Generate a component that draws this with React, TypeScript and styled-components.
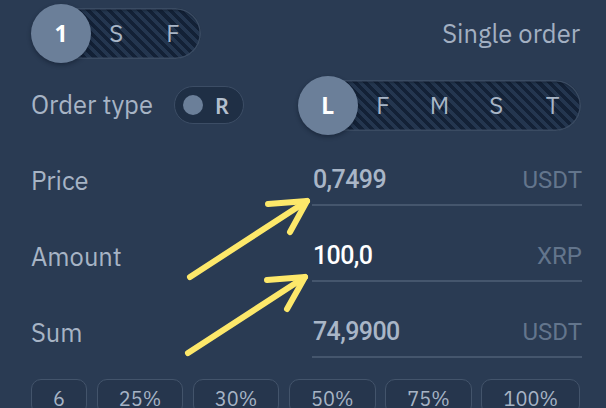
import React from 'react';
import styled, { createGlobalStyle } from 'styled-components';

const GlobalStyle = createGlobalStyle`
  html, body {
    margin: 0;
    padding: 0;
    background: #2a3b53;
  }
  body {
    font-family: 'IBM Plex Sans', 'Noto Sans', sans-serif;
  }
`;

const fields = [
  { label: 'Price', value: '0,7499', unit: 'USDT', active: false },
  { label: 'Amount', value: '100,0', unit: 'XRP', active: true },
  { label: 'Sum', value: '74,9900', unit: 'USDT', active: false },
];

const shares = ['6', '25%', '30%', '50%', '75%', '100%'];

const App: React.FC = () => {
  return (
    <StyledApp>
      <GlobalStyle />
      <TopRow>
        <Switch options={['1', 'S', 'F']} />
        <Title>Single order</Title>
      </TopRow>
      <OrderRow>
        <Label>Order type</Label>
        <MiniToggle>
          <MiniDot />
          <MiniText>R</MiniText>
        </MiniToggle>
        <Push />
        <Switch options={['L', 'F', 'M', 'S', 'T']} />
      </OrderRow>
      <Fields>
        {fields.map((f) => (
          <FieldRow key={f.label}>
            <Label>{f.label}</Label>
            <Input>
              <Value $active={f.active}>{f.value}</Value>
              <Unit>{f.unit}</Unit>
            </Input>
          </FieldRow>
        ))}
      </Fields>
      <Shares>
        {shares.map((s) => (
          <Share key={s}>{s}</Share>
        ))}
      </Shares>
      <Arrows width="606" height="408" viewBox="0 0 606 408">
        <g fill="none" stroke="#fde86a" strokeWidth="6" strokeLinecap="round" strokeLinejoin="round">
          <path d="M190 277 L307 201" />
          <path d="M268 204 L307 201 L290 232" />
          <path d="M188 353 L305 277" />
          <path d="M267 280 L305 277 L287 309" />
        </g>
      </Arrows>
    </StyledApp>
  );
};

// Switch with a round knob on a striped track
const Switch: React.FC<{ options: string[] }> = ({ options }) => {
  const [first, ...rest] = options;
  return (
    <SwitchWrap>
      <Knob>{first}</Knob>
      <Track>
        {rest.map((o) => (
          <Slot key={o}>{o}</Slot>
        ))}
      </Track>
    </SwitchWrap>
  );
};

const StyledApp = styled.div`
  position: relative;
  width: 606px;
  height: 408px;
  overflow: hidden;
  box-sizing: border-box;
  padding: 3px 26px 0 31px;
  background: #2a3b53;
  color: #a7b4c5;
`;

const TopRow = styled.div`
  display: flex;
  align-items: center;
  justify-content: space-between;
  height: 60px;
`;

const Title = styled.div`
  font-size: 25.5px;
  color: #a3b0c2;
`;

const OrderRow = styled.div`
  display: flex;
  align-items: center;
  height: 60px;
  margin-top: 12px;
`;

const Push = styled.div`
  flex: 1;
`;

const Label = styled.div`
  font-size: 25.5px;
  color: #a7b4c5;
  line-height: 28px;
`;

const MiniToggle = styled.div`
  display: flex;
  align-items: center;
  box-sizing: border-box;
  width: 70px;
  height: 38px;
  margin-left: 21px;
  padding: 0 0 0 8px;
  border-radius: 19px;
  border: 1.5px solid #3c4d65;
  background: #1f2f45;
`;

const MiniDot = styled.div`
  width: 20px;
  height: 20px;
  border-radius: 50%;
  background: #6b7f99;
`;

const MiniText = styled.div`
  margin-left: 12px;
  font-family: 'Noto Sans', sans-serif;
  font-weight: 600;
  font-size: 21.5px;
  color: #b3bfce;
`;

const SwitchWrap = styled.div`
  display: flex;
  align-items: center;
  margin-right: -1px;
`;

const Knob = styled.div`
  position: relative;
  z-index: 1;
  display: flex;
  align-items: center;
  justify-content: center;
  flex: 0 0 60px;
  height: 59px;
  border-radius: 50%;
  background: #6b7f99;
  box-shadow: 0 2px 4px rgba(10, 20, 35, 0.45);
  color: #fff;
  font-family: 'Noto Sans', sans-serif;
  font-weight: 700;
  font-size: 23px;
  margin-right: -48px;
`;

const Track = styled.div`
  display: flex;
  align-items: center;
  height: 51px;
  padding-left: 45px;
  border-radius: 26px;
  box-shadow: inset 0 0 0 1.5px #3a4b62, inset 0 3px 2px rgba(8, 16, 28, 0.35);
  background: repeating-linear-gradient(45deg, #132136 0 3.6px, #24364f 3.6px 7.2px);
`;

const Slot = styled.div`
  width: 56.6px;
  text-align: center;
  font-size: 24px;
  color: #a9b6c7;
`;

const Fields = styled.div`
  margin-top: -5px;
`;

const FieldRow = styled.div`
  display: grid;
  grid-template-columns: 281px 1fr;
  align-items: end;
  height: 76px;
  & > ${Label} {
    padding-bottom: 11px;
  }
`;

const Input = styled.div`
  display: flex;
  align-items: center;
  justify-content: space-between;
  padding-bottom: 10px;
  border-bottom: 2px solid #45566d;
  margin-right: -2px;
`;

const Value = styled.div<{ $active: boolean }>`
  font-family: 'Roboto', sans-serif;
  font-weight: 500;
  font-size: 25px;
  line-height: 28px;
  letter-spacing: -0.6px;
  color: ${(p) => (p.$active ? '#ffffff' : '#a9b6c7')};
  padding-left: 1px;
`;

const Unit = styled.div`
  font-family: 'Roboto', sans-serif;
  font-size: 24px;
  line-height: 28px;
  color: #63758c;
`;

const Shares = styled.div`
  display: flex;
  justify-content: space-between;
  margin-top: 21px;
`;

const Share = styled.div`
  box-sizing: border-box;
  height: 36px;
  display: flex;
  align-items: center;
  justify-content: center;
  padding: 2px 21px 0;
  border: 1.5px solid #43546b;
  border-radius: 10px;
  background: #26364d;
  font-size: 20px;
  color: #a7b4c5;
`;

const Arrows = styled.svg`
  position: absolute;
  left: 0;
  top: 0;
  pointer-events: none;
`;

export default App;
